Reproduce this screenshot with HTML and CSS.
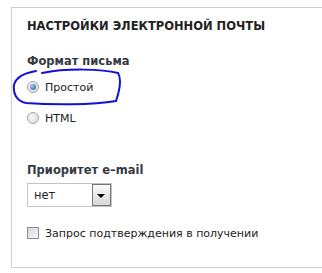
FILE: index.html
```html
<!DOCTYPE html>
<html lang="ru">
<head>
  <meta charset="UTF-8" />
  <title>Настройки электронной почты</title>
  <link rel="stylesheet" href="styles.css">
</head>
<body>
  <div class="panel">
    <h2>НАСТРОЙКИ ЭЛЕКТРОННОЙ ПОЧТЫ</h2>

    <div class="label">Формат письма</div>
    <div class="option">
      <span class="radio checked"></span>
      <span>Простой</span>
      <svg class="scribble" width="110" height="40" viewBox="0 0 110 40">
        <path d="M30 6 C55 1 90 2 106 6 C110 12 108 22 104 34 C80 38 40 38 14 36 C4 34 1 26 2 18 C4 10 12 6 24 4"
              fill="none" stroke="#1010d8" stroke-width="2" stroke-linecap="round"/>
      </svg>
    </div>
    <div class="option">
      <span class="radio"></span>
      <span>HTML</span>
    </div>

    <div class="label priority">Приоритет e–mail</div>
    <div class="select">
      <span class="value">нет</span>
      <span class="arrow"></span>
    </div>

    <div class="option check-row">
      <span class="checkbox"></span>
      <span>Запрос подтверждения в получении</span>
    </div>
  </div>
</body>
</html>
```
FILE: styles.css
```css
* {
  box-sizing: border-box;
}
body {
  margin: 0;
  background: #fff;
  font-family: "DejaVu Sans", Verdana, sans-serif;
  font-size: 11px;
  color: #222;
  overflow: hidden;
}
.panel {
  margin: 7px 0 0 11px;
  width: calc(100vw - 11px);
  height: 261px;
  border: 1px solid #cfcfcf;
  border-right: none;
  padding: 10px 15px;
}
h2 {
  margin: 0 0 19px;
  font-size: 11.5px;
  font-weight: bold;
  color: #222;
  line-height: 16px;
}
.label {
  font-weight: bold;
  font-size: 11.5px;
  line-height: 16px;
  color: #333a44;
}
.option {
  position: relative;
  display: flex;
  align-items: center;
  gap: 6px;
  height: 16px;
  margin-top: 10px;
}
.option + .option {
  margin-top: 15px;
}
.radio {
  width: 12px;
  height: 12px;
  border-radius: 50%;
  border: 1px solid #a8a8a8;
  background: radial-gradient(circle at 40% 40%, #fafafa, #d4d4d4);
  display: inline-flex;
  align-items: center;
  justify-content: center;
}
.radio.checked::after {
  content: "";
  width: 6px;
  height: 6px;
  border-radius: 50%;
  background: radial-gradient(circle at 35% 35%, #8fd0f5, #1a5d9a);
}
.scribble {
  position: absolute;
  left: -15px;
  top: -12px;
}
.priority {
  margin-top: 36px;
}
.select {
  display: flex;
  width: 85px;
  height: 24px;
  margin-top: 5px;
  border: 1px solid #c4c4c4;
}
.value {
  flex: 1;
  padding-left: 6px;
  line-height: 22px;
  font-size: 11.5px;
}
.arrow {
  width: 19px;
  border: 1px solid #777;
  background: linear-gradient(#fafafa, #d8d8d8);
  position: relative;
}
.arrow::after {
  content: "";
  position: absolute;
  left: 4px;
  top: 9px;
  border-left: 4px solid transparent;
  border-right: 4px solid transparent;
  border-top: 4px solid #000;
}
.check-row {
  margin-top: 18px;
}
.checkbox {
  width: 12px;
  height: 12px;
  border: 1px solid #8e8e8e;
  background: linear-gradient(135deg, #d8d8d8, #f6f6f6);
}
```
